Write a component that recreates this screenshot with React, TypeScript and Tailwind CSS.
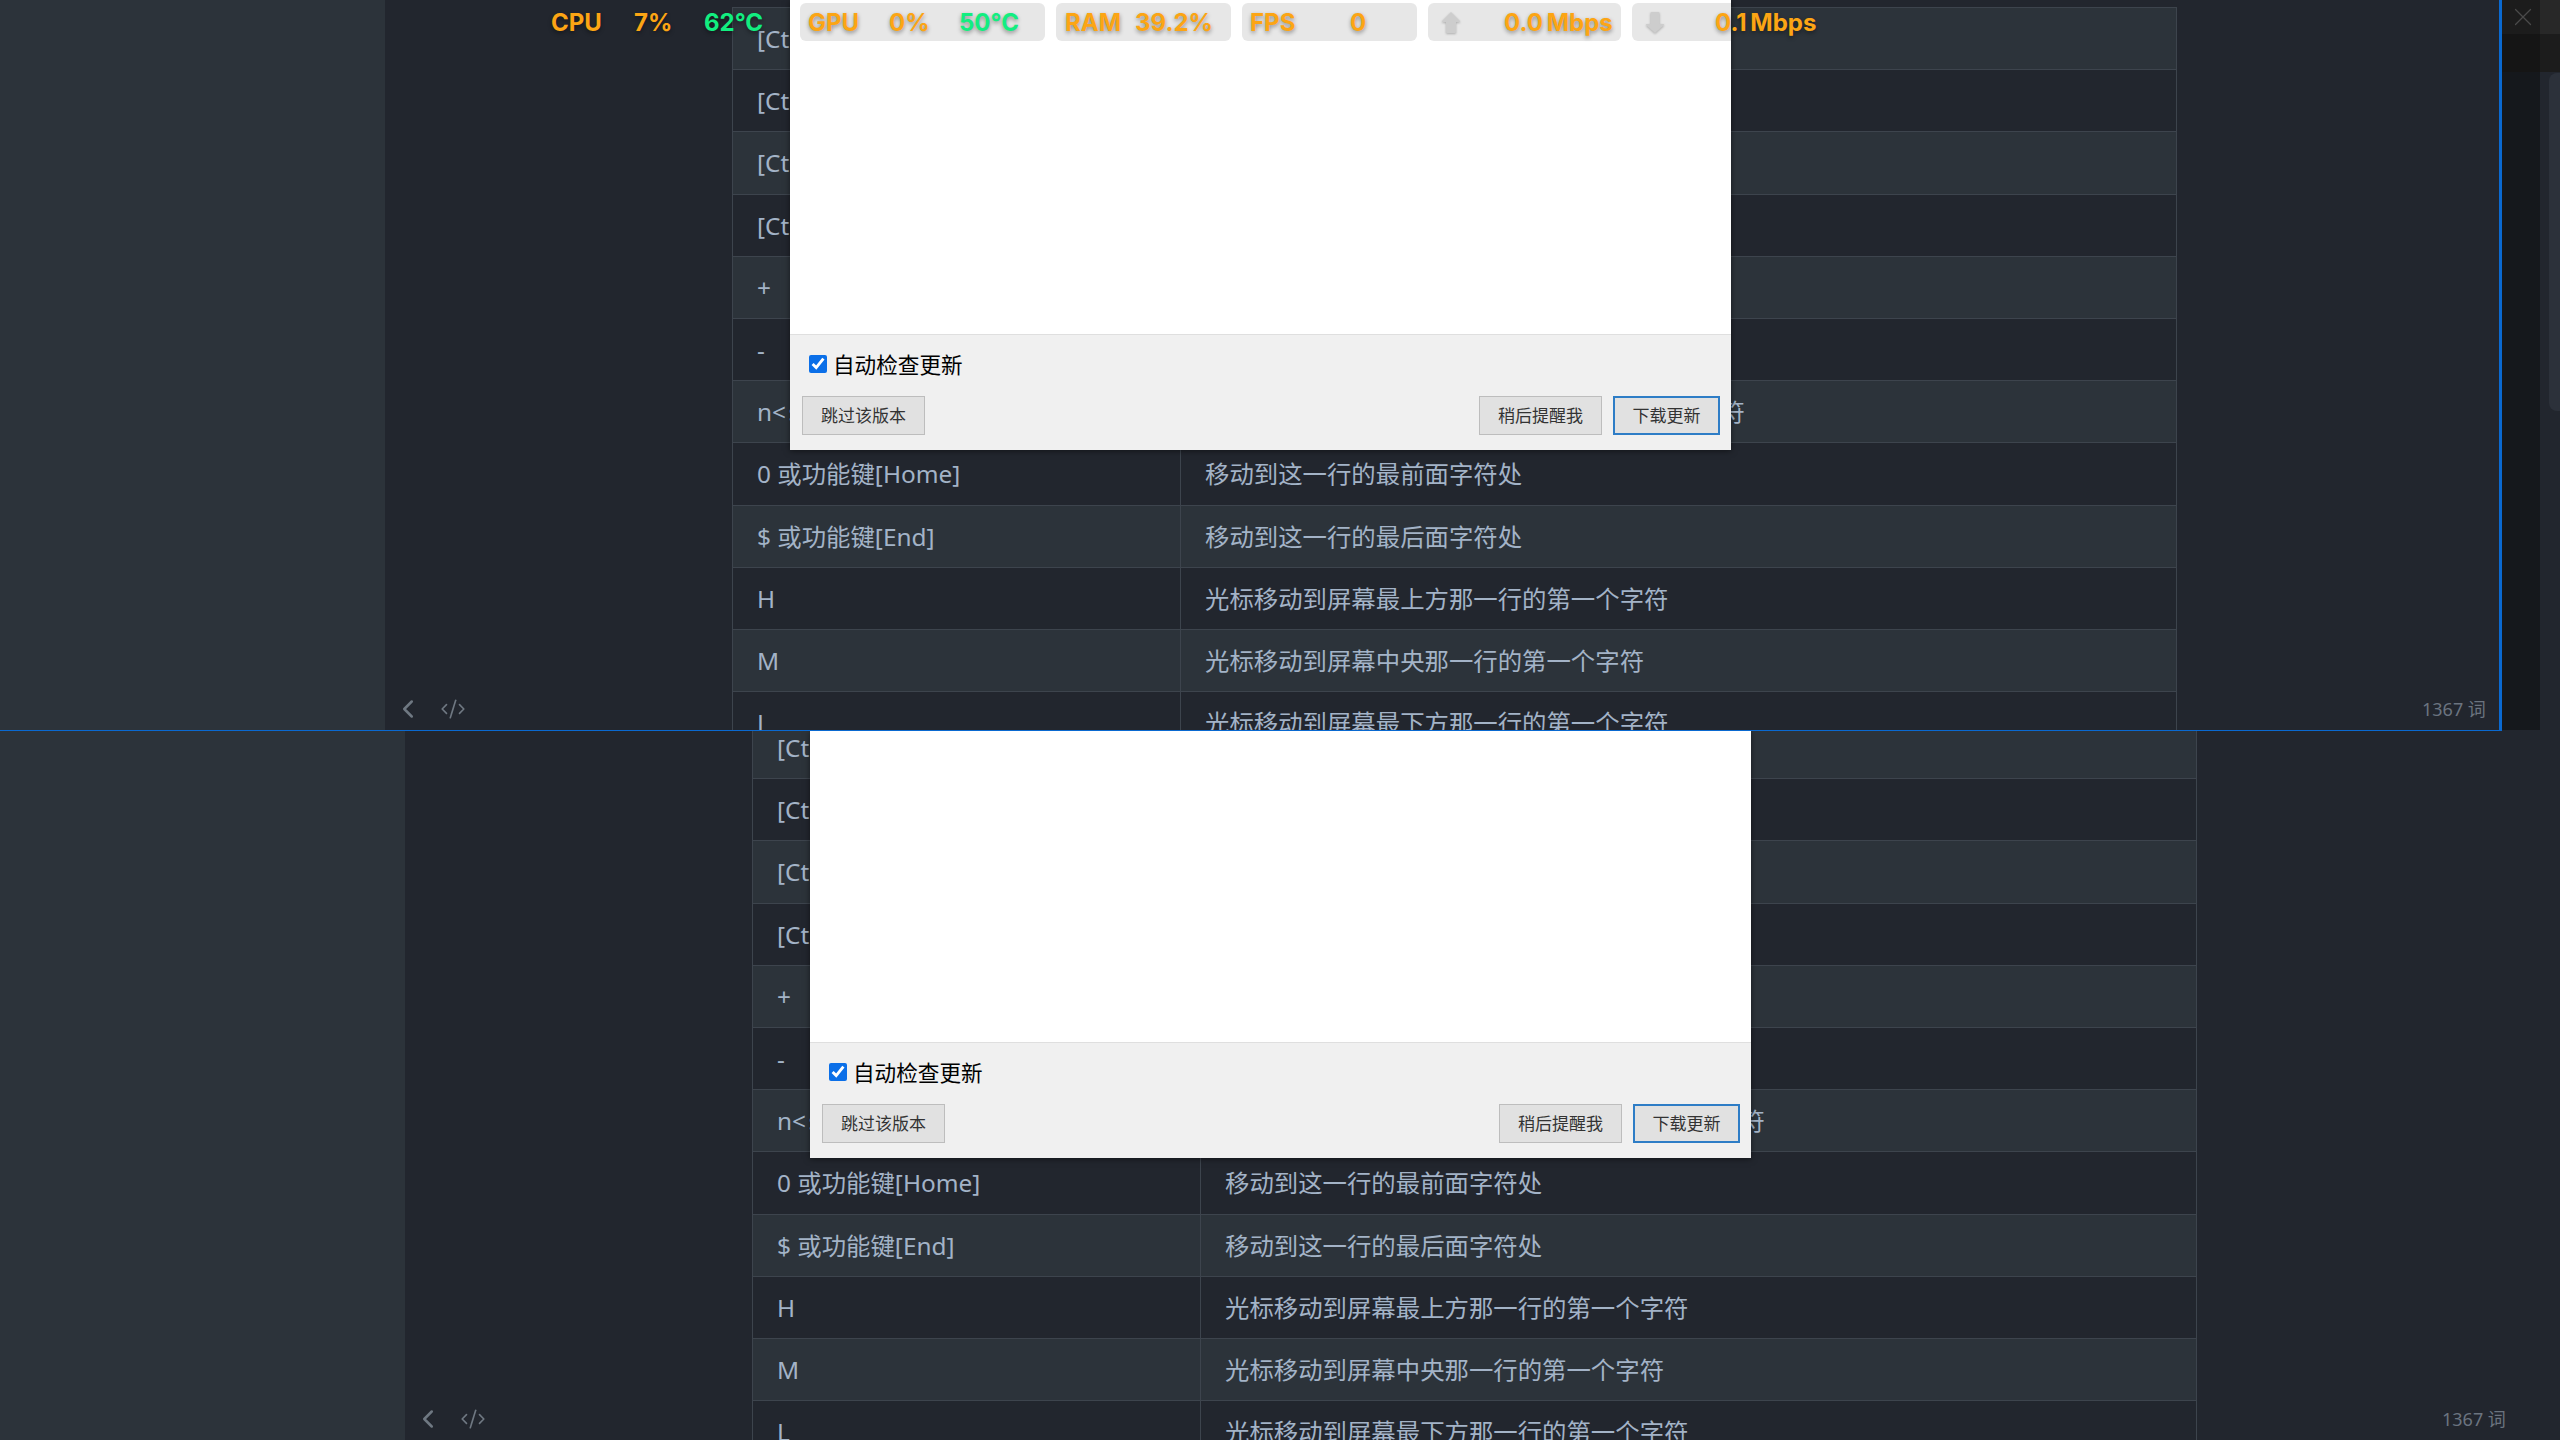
import { ChevronLeft, CodeXml, X } from 'lucide-react'

const cjk = { fontFamily: '"Noto Sans", "Noto Sans CJK SC", sans-serif' }

const rows: [string, string][] = [
  ['[Ctrl]+[F]', '屏幕向下移动一页，相当于[Page Down]按键'],
  ['[Ctrl]+[B]', '屏幕向上移动一页，相当于[Page Up]按键'],
  ['[Ctrl]+[D]', '屏幕向下移动半页'],
  ['[Ctrl]+[U]', '屏幕向上移动半页'],
  ['+', '光标移动到非空格符的下一行'],
  ['-', '光标移动到非空格符的上一行'],
  ['n<\u200Aspace>', '按下数字后再按空格键，光标会向右移动 n 个字符'],
  ['0 或功能键[Home]', '移动到这一行的最前面字符处'],
  ['$ 或功能键[End]', '移动到这一行的最后面字符处'],
  ['H', '光标移动到屏幕最上方那一行的第一个字符'],
  ['M', '光标移动到屏幕中央那一行的第一个字符'],
  ['L', '光标移动到屏幕最下方那一行的第一个字符'],
]

const Table = ({ top }: { top: boolean }) => (
  <div className={top ? 'w-[1445px] shrink-0 mt-[7px]' : 'w-[1445px] shrink-0 -mt-[15px]'}>
    {rows.map(([key, desc], i) => (
      <div
        key={key}
        className={`flex h-[62.2px] border-t border-l border-r border-[#3d444d] text-[24.4px] leading-[62px] text-[#a3b3c7] ${
          i % 2 === 0 ? 'bg-[#2c333a]' : 'bg-[#22262e]'
        }`}
      >
        <div className="w-[448px] shrink-0 pl-[24px] border-r border-[#3d444d] whitespace-nowrap overflow-hidden">{key}</div>
        <div className="flex-1 pl-[24px] whitespace-nowrap overflow-hidden">{desc}</div>
      </div>
    ))}
  </div>
)

const Arrow = ({ up }: { up?: boolean }) => (
  <svg width="20" height="23" viewBox="0 0 20 23" className="[filter:drop-shadow(0_1px_1px_rgba(0,0,0,0.25))]">
    {up ? (
      <path d="M10 1 L19 10 Q19.5 11 18 11 H15 V21 Q15 22 14 22 H6 Q5 22 5 21 V11 H2 Q0.5 11 1 10 Z" fill="#cdcdcd" />
    ) : (
      <path d="M10 22 L1 14 Q0.5 13 2 13 H5.5 V2 Q5.5 1 6.5 1 H13.5 Q14.5 1 14.5 2 V13 H18 Q19.5 13 19 14 Z" fill="#cdcdcd" />
    )}
  </svg>
)

const Dialog = ({ top }: { top: boolean }) => (
  <div
    className={`absolute top-0 flex flex-col w-[941px] bg-white shadow-[0_1px_6px_rgba(0,0,0,0.5)] overflow-hidden ${
      top ? 'left-[790px] h-[450px]' : 'left-[810px] h-[427px]'
    }`}
  >
    {top ? (
      <div className="flex gap-[11px] pl-[10px] pt-[3px]">
        <div className="w-[245px] h-[38px] shrink-0 rounded-[6px] bg-[#e7e7e7]" />
        <div className="w-[175px] h-[38px] shrink-0 rounded-[6px] bg-[#e7e7e7]" />
        <div className="w-[175px] h-[38px] shrink-0 rounded-[6px] bg-[#e7e7e7]" />
        <div className="w-[193px] h-[38px] shrink-0 rounded-[6px] bg-[#e7e7e7] flex items-center pl-[13px]">
          <Arrow up />
        </div>
        <div className="w-[193px] h-[38px] shrink-0 rounded-[6px] bg-[#e7e7e7] flex items-center pl-[13px]">
          <Arrow />
        </div>
      </div>
    ) : null}
    <div className="flex-1" />
    <div className="h-[116px] shrink-0 border-t border-[#dfdfdf] bg-[#f0f0f0] pl-[12px] pr-[11px]">
      <label className="flex items-center h-[61px] pl-[7px] gap-[6px] text-[21.6px] text-black">
        <input type="checkbox" defaultChecked readOnly className="w-[18px] h-[18px] -mt-[3px] accent-[#0b6fe8]" />
        自动检查更新
      </label>
      <div className="flex items-start gap-[11px] text-[17px] text-[#333]">
        <button className="w-[123px] h-[39px] bg-[#e1e1e1] border-[1.5px] border-[#bdbdbd]">跳过该版本</button>
        <div className="flex-1" />
        <button className="w-[123px] h-[39px] bg-[#e1e1e1] border-[1.5px] border-[#bdbdbd]">稍后提醒我</button>
        <button className="w-[107px] h-[39px] bg-[#e1e1e1] border-2 border-[#2e7dc6]">下载更新</button>
      </div>
    </div>
  </div>
)

const Pane = ({ top }: { top: boolean }) => (
  <div className={`relative flex overflow-hidden ${top ? 'h-[730px]' : 'h-[709px]'} bg-[#22262e]`}>
    <div className={`${top ? 'w-[385px]' : 'w-[405px]'} shrink-0 bg-[#2c333a]`} />
    <div className="w-[347px] shrink-0 relative">
      <div className="absolute left-[8px] bottom-[6px] flex items-center gap-[17px] text-[#6f7882]">
        <ChevronLeft size={30} strokeWidth={2} />
        <CodeXml size={26} strokeWidth={1.5} />
      </div>
    </div>
    <Table top={top} />
    <div className="relative flex-1">
      <span className="absolute left-[245px] bottom-[8px] text-[18px] leading-[26px] text-[#6b7480] whitespace-nowrap">1367 词</span>
    </div>
    {top ? (
      <div className="absolute right-0 top-0 bottom-0 w-[61px] flex border-l-[3px] border-[#0a69d0]">
        <div className="w-[38px] bg-[#15181c]">
          <div className="h-[34px] pl-[4px] bg-[#1c1c1c] flex items-center justify-center text-[#4a4a4a]">
            <X size={30} strokeWidth={1} />
          </div>
          <div className="h-[38px] bg-[#151515]" />
        </div>
        <div className="flex-1 bg-[#22262e]">
          <div className="h-[34px] bg-[#282828]" />
          <div className="h-[38px] bg-[#1c1c1c]" />
          <div className="ml-[9px] mt-[1px] h-[338px] rounded-l-[8px] bg-[#2c313a]" />
        </div>
      </div>
    ) : null}
    <Dialog top={top} />
  </div>
)

const Stat = ({ w, children, className }: { w: string; children: string; className?: string }) => (
  <span className={`${w} ${className ?? 'text-[#fca514]'} shrink-0 whitespace-pre`}>{children}</span>
)

export default function App() {
  return (
    <div className="relative w-[2560px] h-[1440px] bg-[#22262e] overflow-hidden" style={cjk}>
      <Pane top />
      <div className="h-px w-[2502px] bg-[#0a69d0]" />
      <Pane top={false} />
      <div
        className="absolute left-[551px] top-[6px] flex items-center text-[24px] leading-[34px] font-bold [word-spacing:-2px] [text-shadow:0_2px_4px_rgba(0,0,0,0.4)]"
        style={{ fontFamily: 'Inter, sans-serif' }}
      >
        <Stat w="w-[83px]">CPU</Stat>
        <Stat w="w-[70px]">7%</Stat>
        <Stat w="w-[104px]" className="text-[#12ee80]">62°C</Stat>
        <Stat w="w-[81px]">GPU</Stat>
        <Stat w="w-[70px]">0%</Stat>
        <Stat w="w-[106px]" className="text-[#12ee80]">50°C</Stat>
        <Stat w="w-[70px]">RAM</Stat>
        <Stat w="w-[115px]">39.2%</Stat>
        <Stat w="w-[100px]">FPS</Stat>
        <Stat w="w-[154px]">0</Stat>
        <Stat w="w-[211px]">0.0 Mbps</Stat>
        <Stat w="w-[110px]">0.1 Mbps</Stat>
      </div>
    </div>
  )
}
